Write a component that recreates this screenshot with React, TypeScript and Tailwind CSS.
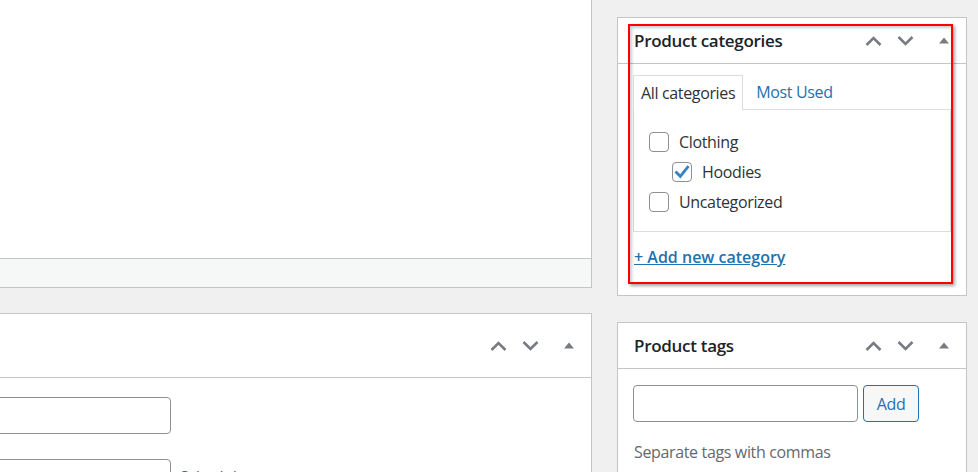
const ChevronUp = () => (
  <svg width="17" height="10" viewBox="0 0 17 10" fill="none">
    <path d="M1.5 9L8.5 2L15.5 9" stroke="#787c82" strokeWidth="2.6" />
  </svg>
);

const ChevronDown = () => (
  <svg width="17" height="10" viewBox="0 0 17 10" fill="none">
    <path d="M1.5 1L8.5 8L15.5 1" stroke="#787c82" strokeWidth="2.6" />
  </svg>
);

const Triangle = () => (
  <svg width="10" height="7" viewBox="0 0 10 7">
    <path d="M0 6.5L5 0.5L10 6.5Z" fill="#787c82" />
  </svg>
);

const HandleButtons = () => (
  <div className="flex h-full items-center">
    <button className="flex h-full w-8 items-center justify-center">
      <ChevronUp />
    </button>
    <button className="flex h-full w-8 items-center justify-center">
      <ChevronDown />
    </button>
    <button className="flex h-full w-[45px] items-center justify-center">
      <Triangle />
    </button>
  </div>
);

const Checkbox = ({ checked = false }: { checked?: boolean }) => (
  <span className="flex h-5 w-5 shrink-0 items-center justify-center rounded-[4px] border border-[#8c8f94] bg-white">
    {checked && (
      <svg width="20" height="20" viewBox="0 0 20 20" fill="none" className="-m-px">
        <path d="M3.5 9.5L8.3 14.3L16.5 4.2" stroke="#3582c4" strokeWidth="2.8" />
      </svg>
    )}
  </span>
);

const CATEGORIES = [
  { id: 1, name: 'Clothing', checked: false, child: false },
  { id: 2, name: 'Hoodies', checked: true, child: true },
  { id: 3, name: 'Uncategorized', checked: false, child: false },
];

const App = () => {
  return (
    <div className="relative flex h-[472px] w-[978px] overflow-hidden bg-[#f0f0f1] font-['Open_Sans',sans-serif] text-[16px] tracking-[-0.35px] text-[#2c3338]">
      {/* left column, partly off screen */}
      <div className="-ml-[40px] flex w-[632px] shrink-0 flex-col">
        <div className="flex h-[288px] shrink-0 flex-col border-x border-b border-[#c3c4c7] bg-white">
          <div className="flex-1" />
          <div className="h-[29px] border-t border-[#c3c4c7] bg-[#f6f7f7]" />
        </div>
        <div className="mt-[25px] shrink-0 border-x border-t border-[#c3c4c7] bg-white pb-10">
          <div className="flex h-[64px] justify-end border-b border-[#c3c4c7]">
            <HandleButtons />
          </div>
          <div className="flex flex-col pl-[15px] pt-[19px]">
            <input className="h-[37px] w-[195px] rounded-[4px] border border-[#8c8f94] bg-white" />
            <div className="mt-[25px] flex items-start">
              <input className="h-[37px] w-[195px] rounded-[4px] border border-[#8c8f94] bg-white" />
              <a className="ml-[9px] mt-[6px] text-[#2271b1] underline">Schedule</a>
            </div>
          </div>
        </div>
      </div>

      {/* right sidebar */}
      <div className="ml-[25px] flex w-[350px] shrink-0 flex-col pt-[17px]">
        <div className="relative h-[279px] shrink-0 border border-[#c3c4c7] bg-white">
          <div className="flex h-[46px] items-center border-b border-[#c3c4c7]">
            <h2 className="flex-1 pl-[16px] text-[17px] font-semibold tracking-[-0.3px] text-[#1d2327]">
              Product categories
            </h2>
            <HandleButtons />
          </div>
          <div className="px-[15px] pt-[10px]">
            <div className="flex items-end">
              <div className="relative z-10 -mb-px flex h-[35px] items-center border-x border-t border-[#dcdcde] bg-white px-[7px]">
                All categories
              </div>
              <div className="flex h-[35px] items-center pl-[13px] text-[#2271b1]">Most Used</div>
            </div>
            <div className="border border-[#dcdcde] pb-[14px] pl-[15px] pt-[17px]">
              {CATEGORIES.map(({ id, name, checked, child }) => (
                <label key={id} className={`flex h-[30px] items-center gap-[10px] ${child ? 'ml-[23px]' : ''}`}>
                  <Checkbox checked={checked} />
                  <span>{name}</span>
                </label>
              ))}
            </div>
            <a className="mt-[13px] block pl-px font-semibold tracking-normal text-[#2271b1] underline">
              + Add new category
            </a>
          </div>
          {/* annotation */}
          <div className="pointer-events-none absolute left-[10px] top-[6px] h-[260px] w-[325px] border-2 border-[#ff0000] shadow-[2px_2px_3px_rgba(0,0,0,0.35),inset_2px_2px_3px_rgba(0,0,0,0.2)]" />
        </div>

        <div className="mt-[26px] shrink-0 border border-[#c3c4c7] bg-white pb-10">
          <div className="flex h-[46px] items-center border-b border-[#c3c4c7]">
            <h2 className="flex-1 pl-[16px] text-[17px] font-semibold tracking-[-0.3px] text-[#1d2327]">
              Product tags
            </h2>
            <HandleButtons />
          </div>
          <div className="px-[15px] pt-[16px]">
            <div className="flex">
              <input className="h-[37px] w-[225px] rounded-[4px] border border-[#8c8f94] bg-white" />
              <button className="ml-[5px] h-[37px] w-[56px] rounded-[4px] border border-[#2271b1] bg-[#f6f7f7] text-[#2271b1]">
                Add
              </button>
            </div>
            <p className="mt-[18px] pl-px text-[#646970]">Separate tags with commas</p>
          </div>
        </div>
      </div>
    </div>
  );
};

export default App;
